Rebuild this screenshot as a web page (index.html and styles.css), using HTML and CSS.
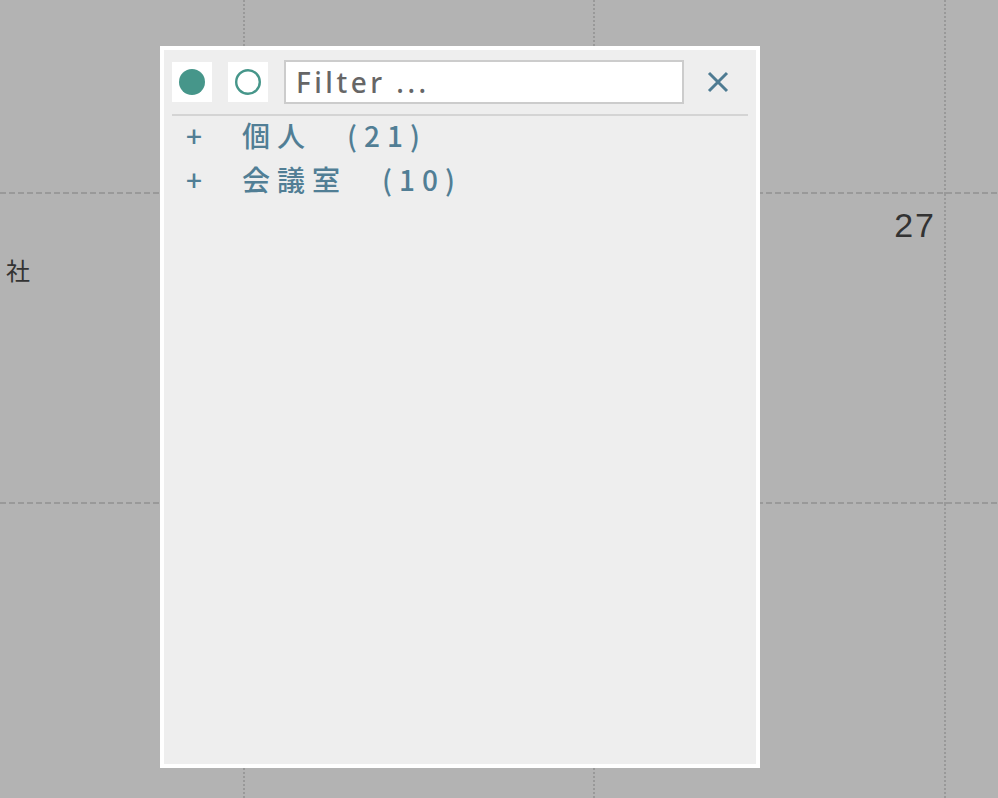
FILE: index.html
```html
<!DOCTYPE html>
<html lang="ja">
<head>
    <meta charset="UTF-8">
    <meta name="viewport" content="width=device-width, initial-scale=1.0">
    <title>カレンダー</title>
    <link rel="stylesheet" href="styles.css">
</head>
<body>
    <!-- 背景のカレンダー -->
    <div class="calendar">
        <div class="cell"></div>
        <div class="cell"></div>
        <div class="cell"></div>
        <div class="cell"></div>

        <div class="cell"><div class="event">社</div></div>
        <div class="cell"></div>
        <div class="cell"><div class="day">27</div></div>
        <div class="cell"></div>

        <div class="cell"></div>
        <div class="cell"></div>
        <div class="cell"></div>
        <div class="cell"></div>
    </div>

    <!-- リソース選択パネル -->
    <div class="picker">
        <div class="picker-head">
            <button class="mode-btn" title="すべて選択">
                <svg width="26" height="26" viewBox="0 0 26 26"><circle cx="13" cy="13" r="13" fill="#46968a"/></svg>
            </button>
            <button class="mode-btn" title="選択解除">
                <svg width="26" height="26" viewBox="0 0 26 26"><circle cx="13" cy="13" r="11.8" fill="none" stroke="#46968a" stroke-width="2.4"/></svg>
            </button>
            <input class="filter" type="text" placeholder="Filter ...">
            <button class="close-btn" title="閉じる">
                <svg width="22" height="22" viewBox="0 0 22 22"><path d="M2 2 L20 20 M20 2 L2 20" stroke="#4e7b92" stroke-width="3" fill="none"/></svg>
            </button>
        </div>
        <div class="divider"></div>
        <ul class="group-list">
            <li class="group"><span class="group-toggle">+</span><span class="group-name">個人</span><span class="group-count">(21)</span></li>
            <li class="group"><span class="group-toggle">+</span><span class="group-name">会議室</span><span class="group-count">(10)</span></li>
        </ul>
    </div>
</body>
</html>
```

FILE: styles.css
```css
body {
    margin: 0;
    background-color: #b3b3b3;
    font-family: "Noto Sans CJK JP", "Noto Sans", sans-serif;
}

.calendar {
    display: grid;
    grid-template-columns: 245px 350px 351px 1fr;
    grid-template-rows: 194px 310px 1fr;
    height: 100vh;
}

.cell {
    border-right: 2px dotted #999;
    /* 破線の下線 */
    background: linear-gradient(to right, #999 6px, transparent 6px) left bottom / 9px 2px repeat-x;
}

.cell:nth-child(4n) {
    border-right: none;
}

.cell:nth-child(n+9) {
    background: none;
}

.event {
    padding: 64px 0 0 6px;
    font-size: 24px;
    line-height: 24px;
    color: #333;
}

.day {
    padding: 11px 8px 0 0;
    text-align: right;
    font-family: "Liberation Sans", Arial, sans-serif;
    font-size: 34px;
    line-height: 40px;
    letter-spacing: 2px;
    color: #333;
}

.picker {
    position: absolute;
    left: 160px;
    top: 46px;
    width: 600px;
    height: 722px;
    box-sizing: border-box;
    border: 4px solid #fff;
    background-color: #eee;
    padding: 10px 8px;
}

.picker-head {
    display: flex;
    align-items: center;
    height: 44px;
}

.mode-btn,
.close-btn {
    width: 40px;
    height: 40px;
    padding: 0;
    border: 0;
    background: #fff;
    display: flex;
    align-items: center;
    justify-content: center;
    margin-right: 16px;
}

.close-btn {
    background: none;
    margin: 0 0 0 14px;
}

.filter {
    width: 400px;
    height: 44px;
    box-sizing: border-box;
    border: 2px solid #ccc;
    background: #fff;
    padding: 0 10px;
    font-family: "Noto Sans", sans-serif;
    font-size: 28px;
    font-weight: 500;
    letter-spacing: 3.5px;
    color: #666;
    outline: none;
}

.filter::placeholder {
    color: #666;
}

.divider {
    height: 2px;
    background-color: #d4d4d4;
    margin-top: 10px;
}

.group-list {
    list-style: none;
    margin: -3px 0 0;
    padding: 0;
}

.group {
    display: flex;
    height: 44px;
    line-height: 44px;
    padding-left: 14px;
    font-size: 28px;
    font-weight: 500;
    letter-spacing: 7px;
    color: #517e95;
}

.group-toggle {
    width: 56px;
}

.group-count {
    margin-left: 35px;
}
```
